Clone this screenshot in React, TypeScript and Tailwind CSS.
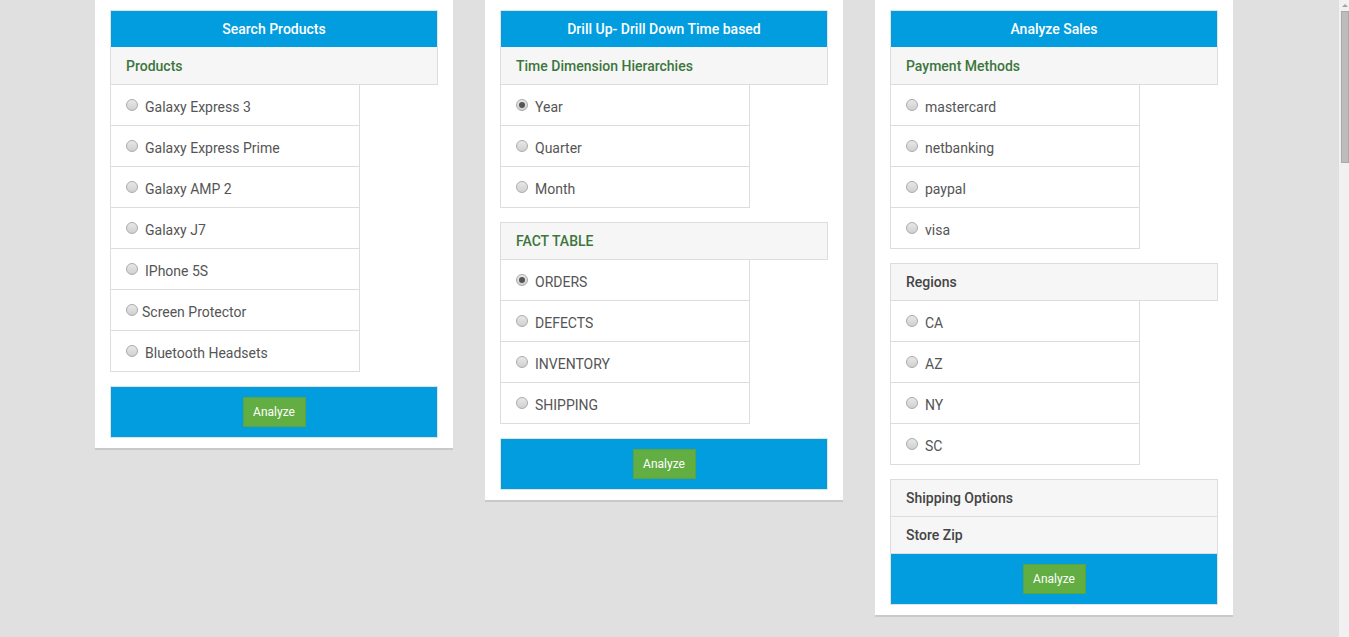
import React from "react";

type Section = { title: string; items?: { label: string; checked?: boolean; tight?: boolean }[]; muted?: boolean };

const panels: { title: string; sections: Section[] }[] = [
  {
    title: "Search Products",
    sections: [
      {
        title: "Products",
        items: [
          { label: "Galaxy Express 3" },
          { label: "Galaxy Express Prime" },
          { label: "Galaxy AMP 2" },
          { label: "Galaxy J7" },
          { label: "IPhone 5S" },
          { label: "Screen Protector", tight: true },
          { label: "Bluetooth Headsets" },
        ],
      },
    ],
  },
  {
    title: "Drill Up- Drill Down Time based",
    sections: [
      {
        title: "Time Dimension Hierarchies",
        items: [{ label: "Year", checked: true }, { label: "Quarter" }, { label: "Month" }],
      },
      {
        title: "FACT TABLE",
        items: [{ label: "ORDERS", checked: true }, { label: "DEFECTS" }, { label: "INVENTORY" }, { label: "SHIPPING" }],
      },
    ],
  },
  {
    title: "Analyze Sales",
    sections: [
      {
        title: "Payment Methods",
        items: [{ label: "mastercard" }, { label: "netbanking" }, { label: "paypal" }, { label: "visa" }],
      },
      { title: "Regions", muted: true, items: [{ label: "CA" }, { label: "AZ" }, { label: "NY" }, { label: "SC" }] },
      { title: "Shipping Options", muted: true },
      { title: "Store Zip", muted: true },
    ],
  },
];

function Radio({ checked }: { checked?: boolean }) {
  return (
    <span className="w-[12px] h-[12px] rounded-full border border-[#ababab] bg-gradient-to-b from-[#e8e8e8] to-[#d0d0d0] flex items-center justify-center shrink-0">
      {checked && <span className="w-[6px] h-[6px] rounded-full bg-[#555]" />}
    </span>
  );
}

// first: top of panel, afterList: follows a list (own top border), else stacked under another header
function SectionHead({ s, kind }: { s: Section; kind: "first" | "afterList" | "stacked" }) {
  const box = kind === "afterList" ? "h-[38px] border-t pt-[1px]" : kind === "first" ? "h-[38px] pt-[2px]" : "h-[37px] pt-[1px]";
  return (
    <div
      className={`${box} bg-[#f6f6f6] border-x border-b border-[#dddddd] flex items-center pl-[15px] text-[14px] font-medium ${
        s.muted ? "text-[#444]" : "text-[#3c763d]"
      }`}
    >
      {s.title}
    </div>
  );
}

function Panel({ title, sections }: { title: string; sections: Section[] }) {
  const lastHasList = !!sections[sections.length - 1].items;
  return (
    <div className="w-[358px] bg-white pt-[10px] pb-[10px] px-[15px] shadow-[0_2px_0_rgba(0,0,0,0.1)]">
      <div className="h-[37px] bg-[#019ddf] border-x border-t border-[#e3e3e3] text-white text-[14px] font-medium flex items-center justify-center">
        {title}
      </div>
      {sections.map((s, i) => {
        const prevHadList = i > 0 && !!sections[i - 1].items;
        const kind = i === 0 ? "first" : prevHadList ? "afterList" : "stacked";
        return (
          <div key={s.title} className={prevHadList ? "mt-[14px]" : ""}>
            <SectionHead s={s} kind={kind} />
            {s.items && (
              <div className="w-[250px] border-x border-[#dddddd]">
                {s.items.map((it) => (
                  <div key={it.label} className="h-[41px] border-b border-[#dddddd] flex items-center pl-[15px] text-[14px] text-[#555]">
                    <Radio checked={it.checked} />
                    <span className={`${it.tight ? "ml-[4px]" : "ml-[7px]"} pt-[4px]`}>{it.label}</span>
                  </div>
                ))}
              </div>
            )}
          </div>
        );
      })}
      <div
        className={`${lastHasList ? "mt-[14px] border-t h-[52px]" : "h-[51px]"} bg-[#019ddf] border-x border-b border-[#e3e3e3] flex items-center justify-center`}
      >
        <button className="h-[30px] w-[63px] bg-[#62ae42] border border-[#5aa53b] text-white text-[12px]">Analyze</button>
      </div>
    </div>
  );
}

export default function App() {
  return (
    <div className="h-[637px] w-full overflow-hidden bg-[#e0e0e0] flex" style={{ fontFamily: "Roboto, 'Liberation Sans', sans-serif" }}>
      <div className="flex-1 flex items-start gap-[32px] pl-[95px]">
        {panels.map((p) => (
          <Panel key={p.title} title={p.title} sections={p.sections} />
        ))}
      </div>
      <div className="w-[10px] bg-[#f1f1f1] flex flex-col items-end">
        <div className="h-[11px] w-full flex items-center justify-center pl-[2px]">
          <span className="w-0 h-0 border-x-[3px] border-x-transparent border-b-[3px] border-b-[#a3a3a3]" />
        </div>
        <div className="w-[8px] h-[152px] bg-[#bcbcbc] border border-[#a9a9a9]" />
      </div>
    </div>
  );
}
